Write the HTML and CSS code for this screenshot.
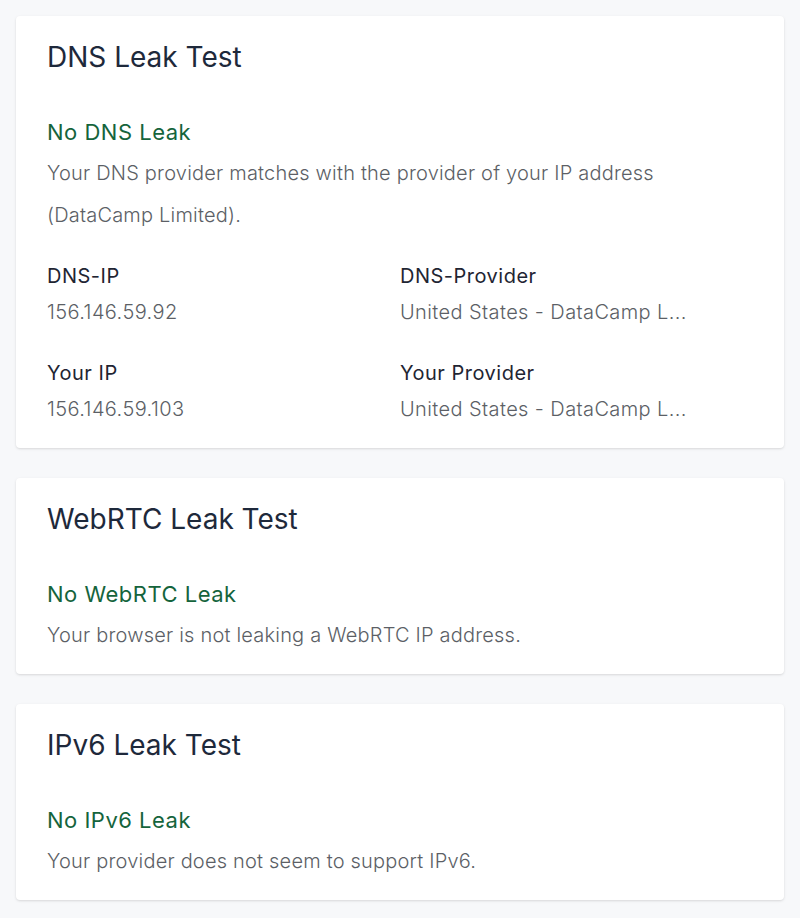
FILE: index.html
```html
<!DOCTYPE html>
<html lang="en">
<head>
<meta charset="utf-8">
<title>Leak Tests</title>
<link rel="stylesheet" href="styles.css">
</head>
<body>
<main class="stack">
  <section class="card">
    <h2 class="card-title">DNS Leak Test</h2>
    <h3 class="status">No DNS Leak</h3>
    <p class="desc">Your DNS provider matches with the provider of your IP address (DataCamp Limited).</p>
    <div class="grid">
      <div class="field">
        <div class="label">DNS-IP</div>
        <div class="value">156.146.59.92</div>
      </div>
      <div class="field">
        <div class="label">DNS-Provider</div>
        <div class="value">United States - DataCamp L...</div>
      </div>
      <div class="field">
        <div class="label">Your IP</div>
        <div class="value">156.146.59.103</div>
      </div>
      <div class="field">
        <div class="label">Your Provider</div>
        <div class="value">United States - DataCamp L...</div>
      </div>
    </div>
  </section>
  <section class="card">
    <h2 class="card-title">WebRTC Leak Test</h2>
    <h3 class="status">No WebRTC Leak</h3>
    <p class="desc">Your browser is not leaking a WebRTC IP address.</p>
  </section>
  <section class="card">
    <h2 class="card-title">IPv6 Leak Test</h2>
    <h3 class="status">No IPv6 Leak</h3>
    <p class="desc">Your provider does not seem to support IPv6.</p>
  </section>
</main>
</body>
</html>
```
FILE: styles.css
```css
* { box-sizing: border-box; }
html, body { margin: 0; padding: 0; }
body {
  background: #f7f8fa;
  font-family: Inter, "Noto Sans", "Liberation Sans", sans-serif;
  padding: 16px;
}
.stack {
  display: flex;
  flex-direction: column;
  gap: 30px;
}
.card {
  background: #ffffff;
  border-radius: 4px;
  box-shadow: 0 1px 3px rgba(0, 0, 0, 0.10), 0 1px 2px rgba(0, 0, 0, 0.04);
  padding: 24px 31px 18px;
}
.card-title {
  margin: 0 0 42px;
  font-size: 28px;
  line-height: 34px;
  font-weight: 400;
  color: #1e293b;
}
.status {
  margin: 0 0 4px;
  font-size: 22px;
  line-height: 32px;
  font-weight: 400;
  letter-spacing: 0.5px;
  color: #15643c;
}
.desc {
  margin: 0;
  font-size: 20px;
  line-height: 42px;
  font-weight: 300;
  letter-spacing: 0.2px;
  color: #5c5f66;
}
.grid {
  display: grid;
  grid-template-columns: 1fr 1fr;
  row-gap: 33px;
  margin-top: 26px;
  margin-bottom: 7px;
}
.label {
  font-size: 20px;
  line-height: 28px;
  font-weight: 400;
  letter-spacing: 0.5px;
  color: #1f2533;
}
.value {
  margin-top: 8px;
  font-size: 20px;
  line-height: 28px;
  font-weight: 300;
  letter-spacing: 0.4px;
  color: #5c5f66;
}
```
